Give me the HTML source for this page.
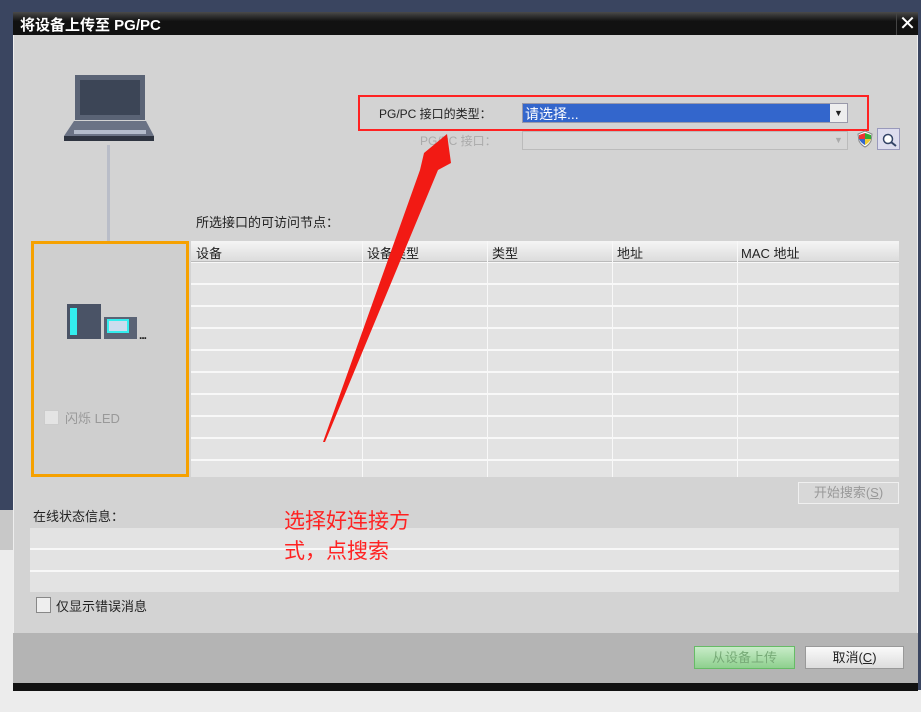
<!DOCTYPE html>
<html><head><meta charset="utf-8"><style>
*{margin:0;padding:0;box-sizing:border-box}
body{width:921px;height:712px;position:relative;overflow:hidden;background:#ececec;font-family:"Liberation Sans","Noto Sans CJK SC",sans-serif;font-size:13px;color:#222}
.a{position:absolute}
.t{white-space:nowrap}
</style></head><body>
<div class="a" style="left:0;top:0;width:921px;height:12px;background:#3a4560"></div>
<div class="a" style="left:0;top:0;width:13px;height:510px;background:#3a4560"></div>
<div class="a" style="left:0;top:510px;width:13px;height:40px;background:#c8c8c8"></div>
<div class="a" style="left:918px;top:0;width:3px;height:690px;background:#3a4560"></div>
<!-- dialog -->
<div class="a" style="left:13px;top:12px;width:905px;height:678px;background:#d3d3d3;border:1px solid #eee"></div>
<div class="a" style="left:13px;top:12px;width:905px;height:23px;background:linear-gradient(#4a4a4a,#111 40%,#111)"></div>
<div class="a t" style="left:20px;top:14px;color:#fff;font-weight:bold;font-size:15px">将设备上传至 PG/PC</div>
<div class="a" style="left:896px;top:13px;width:22px;height:22px;color:#fff;font-size:20px;line-height:22px;text-align:center;border-left:1px solid #444">✕</div>
<div class="a" style="left:13px;top:633px;width:905px;height:50px;background:#b4b4b4"></div>
<div class="a" style="left:13px;top:683px;width:905px;height:8px;background:#111"></div>
<!-- laptop -->
<svg class="a" style="left:60px;top:72px" width="98" height="76">
<path d="M15 3 L85 3 L85 48 L15 48 Z" fill="#5a6375"/>
<rect x="20" y="8" width="60" height="35" fill="#3c4556"/>
<rect x="42" y="50" width="10" height="2" fill="#3ad"/>
<path d="M14 49 L86 49 L94 64 L4 64 Z" fill="#6b7385"/>
<rect x="14" y="58" width="72" height="4" fill="#b4bccb"/>
<rect x="4" y="64" width="90" height="5" fill="#2e3440"/>
</svg>
<div class="a" style="left:107px;top:145px;width:3px;height:175px;background:#b9bdc8"></div>
<!-- orange box -->
<div class="a" style="left:31px;top:241px;width:158px;height:236px;border:3px solid #f6a100;background:#cfcfcf"></div>
<div class="a" style="left:67px;top:304px;width:34px;height:35px;background:#4a5366"></div>
<div class="a" style="left:70px;top:308px;width:7px;height:27px;background:#3ee"></div>
<div class="a" style="left:104px;top:317px;width:33px;height:22px;background:#5a6375"></div>
<div class="a" style="left:107px;top:319px;width:22px;height:14px;background:#cde;border:2px solid #3ee"></div>
<div class="a t" style="left:139px;top:328px;font-size:12px;font-weight:bold;letter-spacing:-1px">...</div>
<div class="a" style="left:44px;top:410px;width:15px;height:15px;background:#e4e4e4;border:1px solid #ccc"></div>
<div class="a t" style="left:65px;top:408px;color:#999">闪烁 LED</div>
<!-- interface -->
<div class="a" style="left:358px;top:95px;width:511px;height:36px;border:2px solid #f22"></div>
<div class="a t" style="left:379px;top:105px;font-size:12px">PG/PC 接口的类型：</div>
<div class="a" style="left:522px;top:103px;width:326px;height:20px;background:#3366cc;border:1px solid #99a"></div>
<div class="a t" style="left:525px;top:104px;color:#fff;font-size:14px">请选择...</div>
<div class="a" style="left:830px;top:104px;width:17px;height:18px;background:#eee;font-size:9px;text-align:center;line-height:18px">▼</div>
<div class="a t" style="left:420px;top:132px;font-size:12px;color:#aaa">PG/PC 接口：</div>
<div class="a" style="left:522px;top:131px;width:326px;height:19px;background:#d6d6d6;border:1px solid #bbb"></div>
<div class="a" style="left:830px;top:132px;width:17px;height:17px;font-size:9px;color:#aaa;text-align:center;line-height:17px">▼</div>
<svg class="a" style="left:856px;top:130px" width="18" height="18"><path d="M9 1 L16 4 L15 11 Q13 15 9 17 Q5 15 3 11 L2 4 Z" fill="#fff" stroke="#888"/><path d="M9 3 L9 9 L3 9 L3 5Z" fill="#e33"/><path d="M9 3 L15 5 L15 9 L9 9Z" fill="#3a3"/><path d="M3 9 L9 9 L9 15 Q5 13 3 9Z" fill="#36c"/><path d="M9 9 L15 9 Q13 13 9 15Z" fill="#ec3"/></svg>
<div class="a" style="left:877px;top:128px;width:23px;height:22px;background:#dde;border:1px solid #99b"></div>
<svg class="a" style="left:880px;top:131px" width="18" height="17"><circle cx="8" cy="8" r="4.5" fill="#fff" stroke="#346" stroke-width="1.5"/><path d="M11 11 L16 15" stroke="#346" stroke-width="2"/></svg>
<div class="a t" style="left:196px;top:212px">所选接口的可访问节点：</div>
<!-- table -->
<div class="a" style="left:191px;top:241px;width:708px;height:236px;background:#e3e3e3;background-image:repeating-linear-gradient(#e3e3e3 0 20px,#f8f8f8 20px 22px)"></div>
<div class="a" style="left:191px;top:241px;width:708px;height:21px;background:linear-gradient(#f5f5f5,#dcdcdc);border-bottom:1px solid #bbb"></div>
<div class="a" style="left:362px;top:241px;width:1px;height:236px;background:#f8f8f8"></div>
<div class="a" style="left:487px;top:241px;width:1px;height:236px;background:#f8f8f8"></div>
<div class="a" style="left:612px;top:241px;width:1px;height:236px;background:#f8f8f8"></div>
<div class="a" style="left:737px;top:241px;width:1px;height:236px;background:#f8f8f8"></div>
<div class="a t" style="left:196px;top:243px">设备</div>
<div class="a t" style="left:367px;top:243px">设备类型</div>
<div class="a t" style="left:492px;top:243px">类型</div>
<div class="a t" style="left:617px;top:243px">地址</div>
<div class="a t" style="left:741px;top:243px">MAC 地址</div>
<div class="a t" style="left:798px;top:482px;width:101px;height:22px;border:1px solid #f0f0f0;background:#d8d8d8;color:#999;text-align:center;line-height:20px;font-size:13px">开始搜索(<u>S</u>)</div>
<div class="a t" style="left:33px;top:506px">在线状态信息：</div>
<div class="a" style="left:30px;top:528px;width:869px;height:64px;background:#e3e3e3;background-image:repeating-linear-gradient(#e3e3e3 0 20px,#f8f8f8 20px 22px)"></div>
<div class="a" style="left:36px;top:597px;width:15px;height:16px;background:#eee;border:1px solid #888"></div>
<div class="a t" style="left:56px;top:596px">仅显示错误消息</div>
<div class="a t" style="left:694px;top:646px;width:101px;height:23px;border:1px solid #6b6;background:linear-gradient(#c8ecc8,#8ed08e);color:#7a7;text-align:center;line-height:21px">从设备上传</div>
<div class="a t" style="left:805px;top:646px;width:99px;height:23px;border:1px solid #999;background:linear-gradient(#fafafa,#ddd);text-align:center;line-height:21px">取消(<u>C</u>)</div>
<!-- annotation -->
<svg class="a" style="left:0;top:0" width="921" height="712"><polygon points="323,442 420,170 424,153 447,134 451,163 438,170 325,442" fill="#f21a14"/></svg>
<div class="a" style="left:284px;top:507px;color:#f22;font-size:21px;line-height:30px;width:150px">选择好连接方式，点搜索</div>
</body></html>
